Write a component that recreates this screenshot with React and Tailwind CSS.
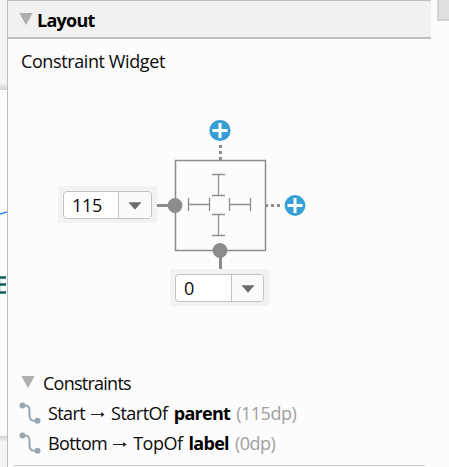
import React from "react";

function Disclosure() {
  return (
    <svg width="14" height="12" viewBox="0 0 14 12" className="block shrink-0">
      <path d="M0.3 0H13.7L7 12Z" fill="#afafaf" />
    </svg>
  );
}

function MarginCombo({ value, fieldWidth }) {
  return (
    <div className="flex h-[37px] w-[99px] shrink-0 bg-[#f2f2f2] px-[5px] pt-[5px]">
      <div className="flex h-[28px] w-[89px] shrink-0 overflow-hidden rounded-[4px] border border-[#c2c2c2] bg-white">
        <div className={`${fieldWidth} border-r border-[#c2c2c2] pl-[8px] text-[18px] leading-[26px] tracking-[-0.35px]`}>
          {value}
        </div>
        <div className="flex flex-1 items-center justify-center bg-[#fafafa] pt-[2px]">
          <svg width="14" height="8" viewBox="0 0 14 8">
            <path d="M0.5 0.3H13.5L7 7.7Z" fill="#6b6b6b" />
          </svg>
        </div>
      </div>
    </div>
  );
}

/* Anchors, wrap-content bars and the add-constraint buttons. */
function WidgetDiagram() {
  return (
    <svg width="150" height="151" viewBox="157 118 150 151" className="block shrink-0">
      <rect x="175.5" y="160.5" width="90" height="90" fill="none" stroke="#8c8c8c" strokeWidth="1.5" />
      <g stroke="#8c8c8c" strokeWidth="3" fill="none">
        <path d="M157 205.5H175M220.5 251V269" />
        <path d="M220.5 145V160" strokeDasharray="3 3" />
        <path d="M265 205.5H280" strokeDasharray="3 3" />
      </g>
      <g stroke="#8f8f8f" strokeWidth="1.3" fill="none">
        <path d="M212 174.5H225M212 195.5H225M218.5 174.5V195.5" />
        <path d="M212 214.5H225M212 235.5H225M218.5 214.5V235.5" />
        <path d="M188.5 198V211M209.5 198V211M188.5 204.5H209.5" />
        <path d="M229.5 198V211M250.5 198V211M229.5 204.5H250.5" />
      </g>
      <circle cx="175" cy="205.5" r="7.4" fill="#8c8c8c" />
      <circle cx="220" cy="250.5" r="7.4" fill="#8c8c8c" />
      <g fill="#389fd6">
        <circle cx="220" cy="130.5" r="10.6" />
        <circle cx="295" cy="205.5" r="10.4" />
      </g>
      <path
        d="M212.5 130.5H227.5M220 123V138M287.5 205.5H302.5M295 198V213"
        stroke="#fff"
        strokeWidth="3"
      />
    </svg>
  );
}

function ConstraintRow({ from, to, target, margin }) {
  return (
    <div className="flex h-[30px] items-center pl-[11px] text-[18px]">
      <svg width="22" height="22" viewBox="0 0 22 22" className="mt-[-1px] block shrink-0">
        <path d="M3.5 3.5H6C9.5 3.5 10.5 5 10.5 8.5V13C10.5 17 11.8 18.7 15 18.7H18" fill="none" stroke="#9aa7b0" strokeWidth="2" />
        <circle cx="3.5" cy="3.6" r="3" fill="#9aa7b0" />
        <circle cx="18.5" cy="18.7" r="3" fill="#9aa7b0" />
      </svg>
      <div className="ml-[7px] flex items-center gap-[6px] tracking-[-0.5px]">
        <span className="tracking-[-0.6px]">{from}</span>
        <svg width="14" height="8" viewBox="0 0 14 8" className="mt-[1px] block shrink-0">
          <path d="M0 4.5H12.5" stroke="#222" strokeWidth="1" />
          <path d="M10.2 2L13.6 4.5L10.2 7Z" fill="#222" />
        </svg>
        <span>{to}</span>
        <b className="tracking-[-0.7px] text-black">{target}</b>
        <span className="text-[#a0a0a0]">({margin})</span>
      </div>
    </div>
  );
}

/* Sliver of the design surface left of the panel. */
function SurfaceEdge() {
  return (
    <div className="flex w-[7px] shrink-0 flex-col bg-[#f4f4f4]">
      <div className="h-[84px]" />
      <div className="h-[6px] bg-gradient-to-b from-[#f0f0f0] to-[#cfcfcf]" />
      <div className="h-[346px] bg-[#fcfcfc]">
        <svg width="7" height="210" viewBox="0 90 7 210" className="block">
          <path d="M0 214L7 212" stroke="#2d8cf0" strokeWidth="1.4" />
          <path d="M0.5 277V293" stroke="#cfe0dc" strokeWidth="1" />
          <path d="M0 277.5H6M0 284.5H6M0 292.5H6" stroke="#0b6354" strokeWidth="2.6" />
        </svg>
      </div>
      <div className="h-[6px] bg-gradient-to-b from-[#d2d2d2] to-[#f4f4f4]" />
    </div>
  );
}

export default function App() {
  return (
    <div className="flex h-[467px] w-[449px] overflow-hidden bg-[#fcfcfc] font-['Open_Sans','Noto_Sans',sans-serif] text-[#0a0a0a]">
      <SurfaceEdge />
      <div className="flex w-[424px] shrink-0 flex-col border-l border-[#bdbdbd]">
        <div className="flex h-[39px] shrink-0 items-center gap-[4px] border-t border-b-2 border-[#c0c0c0] bg-[#f1f1f1] pl-[11px]">
          <div className="mb-[1px]"><Disclosure /></div>
          <div className="pt-[1px] text-[18px] font-bold leading-[30px] tracking-[-0.75px] text-black">Layout</div>
        </div>
        <div className="h-[79px] shrink-0 pl-[13px] pt-[7px] text-[18px] leading-[30px] tracking-[-0.4px]">
          Constraint Widget
        </div>
        <div className="flex h-[151px] shrink-0 pl-[50px]">
          <div className="pt-[68px]"><MarginCombo value="115" fieldWidth="w-[55px]" /></div>
          <WidgetDiagram />
        </div>
        <div className="h-[99px] shrink-0 pl-[162px]">
          <MarginCombo value="0" fieldWidth="w-[56px]" />
        </div>
        <div className="flex h-[30px] shrink-0 items-center gap-[8px] pl-[13px]">
          <div className="mb-[3px]"><Disclosure /></div>
          <div className="text-[18px] leading-[30px] tracking-[-0.75px]">Constraints</div>
        </div>
        <ConstraintRow from="Start" to="StartOf" target="parent" margin="115dp" />
        <ConstraintRow from="Bottom" to="TopOf" target="label" margin="0dp" />
        <div className="ml-[6px] mt-[7px] h-px w-[411px] shrink-0 bg-[#c4c4c4]" />
      </div>
      <div className="flex flex-1 items-start justify-end">
        <div className="h-[21px] w-[12px] border-b-2 border-l-2 border-[#d2d2d2] bg-[#e0e0e0]" />
      </div>
    </div>
  );
}
